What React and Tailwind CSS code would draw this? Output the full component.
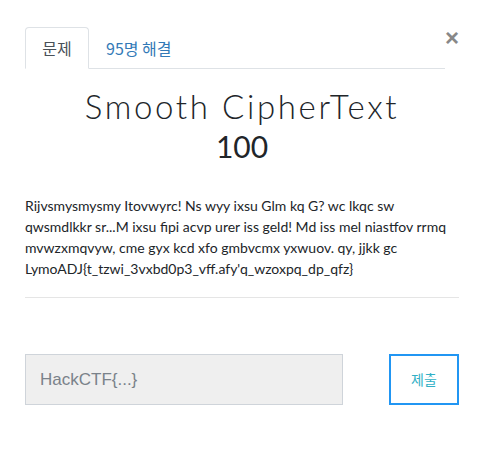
import React, { useState } from "react";

const description =
  "Rijvsmysmysmy Itovwyrc! Ns wyy ixsu Glm kq G? wc lkqc sw qwsmdlkkr sr...M ixsu fipi acvp urer iss geld! Md iss mel niastfov rrmq mvwzxmqvyw, cme gyx kcd xfo gmbvcmx yxwuov. qy, jjkk gc LymoADJ{t_tzwi_3vxbd0p3_vff.afy'q_wzoxpq_dp_qfz}";

export default function App() {
  const [flag, setFlag] = useState("");

  return (
    <div className="relative w-[487px] h-[449px] bg-white pl-[25px] pr-[28px] pt-[27px] font-['Lato','Noto_Sans_CJK_KR',sans-serif]">
      <button className="absolute top-[26px] right-[28px] text-[#888] text-[24px] font-bold leading-none font-['Liberation_Sans',sans-serif]">
        ×
      </button>

      <ul className="flex w-[420px] border-b border-[#dee2e6] text-[16px] font-['Noto_Sans_CJK_KR',sans-serif]">
        <li className="-mb-px h-[42px] w-[64px] flex items-center justify-center border border-[#dee2e6] border-b-white rounded-t-[4px] text-[#495057]">
          문제
        </li>
        <li className="h-[41px] flex items-center px-[17px] text-[#337ab7]">95명 해결</li>
      </ul>

      <div className="text-center mt-[17px]">
        <h3 className="text-[33px] leading-[40px] font-light tracking-[0.08em] text-[#212529] font-['Lato',sans-serif]">
          Smooth CipherText
        </h3>
        <h4 className="text-[30px] leading-[36px] text-[#212529] mt-[2px]">100</h4>
      </div>

      <p className="mt-[31px] text-[14px] leading-[21px] text-[#212529]">{description}</p>

      <hr className="mt-[18px] border-[#e5e5e5]" />

      <div className="flex justify-between mt-[56px]">
        <input
          type="text"
          value={flag}
          onChange={(e) => setFlag(e.target.value)}
          placeholder="HackCTF{...}"
          className="w-[318px] h-[51px] bg-[#efefef] border border-[#cfd4da] px-[14px] text-[17px] text-[#495057] placeholder:text-[#7a828a] outline-none font-['Liberation_Sans',sans-serif]"
        />
        <button className="w-[70px] h-[51px] border-2 border-[#2196f3] text-[#31b0c6] text-[14px] font-['Noto_Sans_CJK_KR',sans-serif]">
          제출
        </button>
      </div>
    </div>
  );
}
